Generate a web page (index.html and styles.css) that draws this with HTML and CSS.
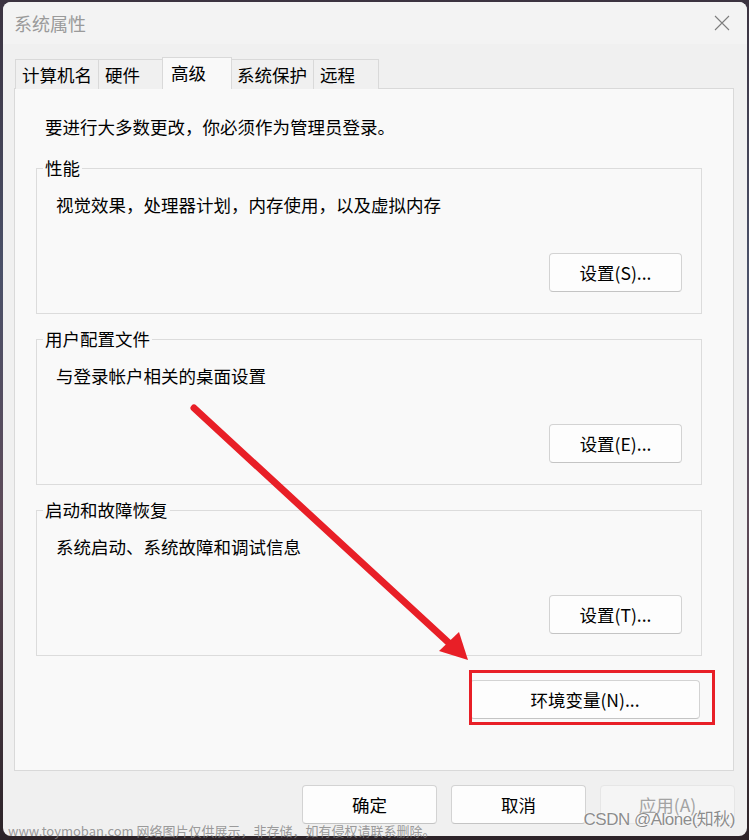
FILE: index.html
```html
<!DOCTYPE html>
<html lang="zh-CN">
<head>
    <meta charset="UTF-8">
    <meta name="viewport" content="width=device-width, initial-scale=1.0">
    <title>系统属性</title>
    <link rel="stylesheet" href="styles.css">
</head>
<body>
    <div class="window">
        <header class="titlebar">
            <span class="title">系统属性</span>
            <button class="close-btn" aria-label="关闭">
                <svg width="16" height="16" viewBox="0 0 16 16">
                    <path d="M1 1 L15 15 M15 1 L1 15" stroke="#7d7d7d" stroke-width="1.1" fill="none"/>
                </svg>
            </button>
        </header>

        <div class="dialog">
            <nav class="tabs">
                <div class="tab">计算机名</div>
                <div class="tab">硬件</div>
                <div class="tab active">高级</div>
                <div class="tab">系统保护</div>
                <div class="tab">远程</div>
            </nav>

            <section class="tab-panel">
                <p class="intro">要进行大多数更改，你必须作为管理员登录。</p>

                <fieldset class="group">
                    <legend>性能</legend>
                    <p>视觉效果，处理器计划，内存使用，以及虚拟内存</p>
                    <div class="group-actions">
                        <button class="btn">设置(S)...</button>
                    </div>
                </fieldset>

                <fieldset class="group">
                    <legend>用户配置文件</legend>
                    <p>与登录帐户相关的桌面设置</p>
                    <div class="group-actions">
                        <button class="btn">设置(E)...</button>
                    </div>
                </fieldset>

                <fieldset class="group">
                    <legend>启动和故障恢复</legend>
                    <p>系统启动、系统故障和调试信息</p>
                    <div class="group-actions">
                        <button class="btn">设置(T)...</button>
                    </div>
                </fieldset>

                <div class="env-row">
                    <button class="btn env-btn">环境变量(N)...</button>
                </div>
            </section>

            <footer class="dialog-buttons">
                <button class="btn wide">确定</button>
                <button class="btn wide">取消</button>
                <button class="btn wide" disabled>应用(A)</button>
            </footer>
        </div>
    </div>

    <!-- annotations drawn on top of the screenshot -->
    <svg class="arrow-overlay" width="749" height="840" viewBox="0 0 749 840">
        <line x1="194" y1="408" x2="449" y2="643" stroke="#e81f27" stroke-width="7" stroke-linecap="round"/>
        <polygon points="468,660 439,651 459,632" fill="#e81f27"/>
    </svg>
    <div class="highlight-box"></div>

    <div class="watermark-left">www.toymoban.com 网络图片仅供展示，非存储，如有侵权请联系删除。</div>
    <div class="watermark-right">CSDN @Alone(知秋)</div>
</body>
</html>
```

FILE: styles.css
```css
* {
    margin: 0;
    padding: 0;
    box-sizing: border-box;
}

body {
    position: relative;
    width: 749px;
    height: 840px;
    overflow: hidden;
    font-family: "Noto Sans CJK SC", sans-serif;
    font-size: 17.5px;
    color: #000;
    background: linear-gradient(180deg, #3b3340 0%, #4a5068 32%, #5d4a58 62%, #2c2328 100%);
}

.window {
    width: 744px;
    height: 834px;
    margin: 2px 0 0 3px;
    border-radius: 8px;
    overflow: hidden;
    background-color: #f0f0f0;
    display: flex;
    flex-direction: column;
}

/* Barre de titre */
.titlebar {
    height: 42px;
    background-color: #f3f3f3;
    display: flex;
    justify-content: space-between;
    align-items: center;
    padding: 0 10px 0 11px;
}

.title {
    font-size: 18px;
    color: #9a9a9a;
    line-height: 24px;
}

.close-btn {
    width: 30px;
    height: 30px;
    border: none;
    background: none;
    display: flex;
    align-items: center;
    justify-content: center;
}

/* Contenu */
.dialog {
    padding: 13px 12px 0 11px;
}

.tabs {
    display: flex;
    align-items: flex-end;
    height: 32px;
    margin: 0 0 -1px 1px;
}

.tab {
    position: relative;
    height: 30px;
    min-width: 66px;
    padding: 0 6px;
    line-height: 29px;
    border: 1px solid #d9d9d9;
    border-bottom: none;
    background-color: #f0f0f0;
}

.tab + .tab {
    margin-left: -1px;
}

.tab.active {
    height: 32px;
    min-width: 70px;
    margin: 0 -1px 0 -2px;
    padding: 0 6px 2px 8px;
    background-color: #f9f9f9;
    z-index: 1;
}

.tab-panel {
    margin-right: 1px;
    background-color: #f9f9f9;
    border: 1px solid #d9d9d9;
    padding: 26px 31px 51px 21px;
}

.intro {
    line-height: 24px;
    margin: 0 0 17px 9px;
}

.group {
    border: 1px solid #dcdcdc;
    padding: 13px 19px 21px 6px;
    min-width: 0;
}

.group + .group {
    margin-top: 13px;
}

.group legend {
    padding: 0 2px;
    line-height: 24px;
}

.group p {
    line-height: 24px;
    margin-left: 13px;
}

.group-actions {
    display: flex;
    justify-content: flex-end;
    margin-top: 36px;
}

.btn {
    font: inherit;
    color: #000;
    width: 133px;
    height: 39px;
    background-color: #fdfdfd;
    border: 1px solid #d3d3d3;
    border-bottom-color: #c4c4c4;
    border-radius: 4px;
    line-height: 24px;
}

.btn:disabled {
    color: #a3a3a3;
    background-color: #f5f5f5;
    border-color: #e6e6e6;
}

.env-row {
    display: flex;
    justify-content: flex-end;
    margin-top: 24px;
    padding-right: 2px;
}

.env-btn {
    width: 230px;
}

.dialog-buttons {
    display: flex;
    justify-content: flex-end;
    gap: 14px;
    margin-top: 14px;
}

.btn.wide {
    width: 135px;
}

/* Annotations */
.arrow-overlay {
    position: absolute;
    left: 0;
    top: 0;
    pointer-events: none;
}

.highlight-box {
    position: absolute;
    left: 469px;
    top: 670px;
    width: 246px;
    height: 55px;
    border: 3px solid #e81f27;
    pointer-events: none;
}

.watermark-left {
    position: absolute;
    left: 8px;
    top: 824px;
    font-size: 13px;
    line-height: 14px;
    color: rgba(130, 130, 130, 0.8);
    white-space: nowrap;
}

.watermark-right {
    position: absolute;
    right: 14px;
    top: 808px;
    font-family: "Liberation Sans", "Noto Sans CJK SC", sans-serif;
    font-size: 17px;
    letter-spacing: -0.5px;
    line-height: 24px;
    color: rgba(120, 120, 120, 0.85);
    text-shadow: 0 0 2px #fff;
    white-space: nowrap;
}
```
